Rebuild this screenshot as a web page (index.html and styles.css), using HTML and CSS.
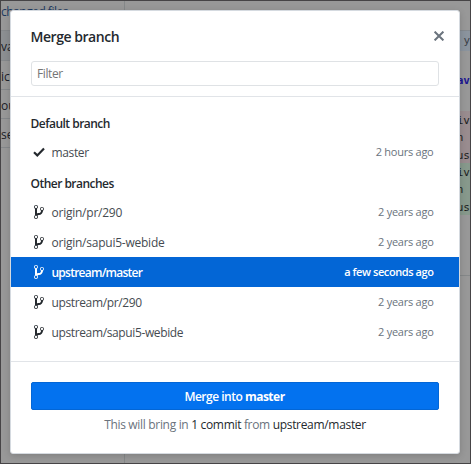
FILE: index.html
```html
<!DOCTYPE html>
<html lang="en">
<head>
<meta charset="utf-8">
<title>Merge branch</title>
<link rel="stylesheet" href="styles.css">
</head>
<body>
<svg class="symbols" aria-hidden="true">
  <symbol id="branch" viewBox="0 0 10 16"><path fill-rule="evenodd" d="M10 5c0-1.110-.89-2-2-2a1.993 1.993 0 0 0-1 3.720v.3c-.02.52-.23.98-.63 1.380-.4.400-.86.610-1.380.630-.83.020-1.480.160-2 .450V4.720a1.993 1.993 0 0 0-1-3.720C.880 1 0 1.890 0 3a2 2 0 0 0 1 1.720v6.560c-.59.350-1 .990-1 1.720 0 1.110.890 2 2 2 1.110 0 2-.890 2-2 0-.530-.200-1-.530-1.360.090-.060.480-.410.590-.470.250-.110.560-.170.940-.170 1.050-.050 1.950-.450 2.750-1.250S8.950 7.770 9 6.730h-.02C9.590 6.370 10 5.730 10 5zM2 1.800c.660 0 1.200.550 1.200 1.200 0 .650-.550 1.200-1.200 1.200C1.350 4.200.800 3.650.800 3c0-.650.550-1.200 1.200-1.200zm0 12.410c-.660 0-1.200-.550-1.200-1.200 0-.650.550-1.200 1.200-1.200.650 0 1.200.550 1.200 1.200 0 .650-.550 1.200-1.200 1.200zm6-8c-.660 0-1.200-.550-1.200-1.200 0-.650.550-1.200 1.200-1.200.650 0 1.200.550 1.200 1.200 0 .650-.550 1.200-1.200 1.200z"/></symbol>
</svg>
<div class="app">
  <aside class="sidebar">
    <div class="files head"><span>changed files</span></div>
    <div class="files on"><span>va</span></div>
    <div class="files"><span>ic</span></div>
    <div class="files"><span>ou</span></div>
    <div class="files"><span>se</span></div>
  </aside>
  <main class="diff">
    <div class="title"></div>
    <div class="hunk">y</div>
    <div class="context">av</div>
    <pre class="removed">iv
n 
us</pre>
    <pre class="added">iv
n 
us</pre>
    <div class="rest"></div>
  </main>
</div>
<section class="dialog">
  <header>
    <div class="heading"><h1>Merge branch</h1>
      <svg class="close" viewBox="0 0 10 10"><path d="M.6.6l8.800 8.800M9.400.600L.600 9.400"/></svg></div>
    <input type="text" placeholder="Filter">
  </header>
  <div class="list">
    <h2>Default branch</h2>
    <div class="row"><svg class="check" viewBox="0 0 12 10"><path d="M1 5.300l3.300 3.100L11 1.600"/></svg><span class="name">master</span><time>2 hours ago</time></div>
    <h2>Other branches</h2>
    <div class="row origin"><svg class="branch"><use href="#branch"/></svg><span class="name">origin/pr/290</span><time>2 years ago</time></div>
    <div class="row origin"><svg class="branch"><use href="#branch"/></svg><span class="name">origin/sapui5-webide</span><time>2 years ago</time></div>
    <div class="row selected"><svg class="branch"><use href="#branch"/></svg><span class="name">upstream/master</span><time>a few seconds ago</time></div>
    <div class="row"><svg class="branch"><use href="#branch"/></svg><span class="name">upstream/pr/290</span><time>2 years ago</time></div>
    <div class="row"><svg class="branch"><use href="#branch"/></svg><span class="name">upstream/sapui5-webide</span><time>2 years ago</time></div>
  </div>
  <footer>
    <button>Merge into <b>master</b></button>
    <p>This will bring in <em>1 commit</em> from <em>upstream/master</em></p>
  </footer>
</section>
</body>
</html>
```
FILE: styles.css
```css
* { box-sizing: border-box; }
body {
  margin: 0;
  width: 471px;
  height: 464px;
  overflow: hidden;
  font: 12px/18px "Open Sans", "Noto Sans", sans-serif;
  color: #24292e;
}
.symbols { position: absolute; width: 0; height: 0; }
.app {
  display: flex;
  width: 471px;
  height: 464px;
  border: 1px solid #464446;
  background: #989898;
  overflow: hidden;
}
.sidebar { width: 124px; border-right: 1px solid #858889; }
.files {
  height: 29px;
  padding-top: 7px;
  border-bottom: 1px solid #85888b;
  color: #1b2027;
  white-space: nowrap;
}
.files.head { height: 30px; padding-top: 2px; color: #1d3a60; letter-spacing: -.5px; }
.files.on { background: #8c8f92; height: 30px; }
.diff {
  flex: 1;
  display: flex;
  flex-direction: column;
  text-align: right;
  font: 11px/17.333px "DejaVu Sans Mono", monospace;
  color: #1b1d20;
}
.title { height: 30px; border-bottom: 1px solid #84898e; }
.hunk { height: 20px; padding-top: 1px; background: #8b949e; color: #3c4147; }
.context { height: 60px; padding-top: 21px; font-weight: bold; color: #1c1592; }
pre { margin: 0; height: 52px; padding-top: 1px; font: inherit; }
.removed { background: #998c8f; }
.added { background: #87998c; }
.rest { height: 61px; border-bottom: 1px solid #858889; }

.dialog {
  position: absolute;
  left: 10px;
  top: 10px;
  width: 450px;
  height: 444px;
  border: 1px solid #d5dae0;
  border-radius: 3px;
  background: #fff;
  box-shadow: 0 2px 7px rgba(0, 0, 0, .16);
}
header { height: 86px; padding: 15px 20px 0; border-bottom: 1px solid #e1e4e8; }
.heading { display: flex; justify-content: space-between; height: 35px; }
h1 { margin: 0 0 0 -.5px; font-size: 14px; line-height: 21px; font-weight: 600; letter-spacing: -.46px; }
.close { width: 10px; height: 10px; margin: 5px -5px 0 0; stroke: #6a737d; stroke-width: 2; }
input {
  display: block;
  width: 408px;
  height: 25px;
  padding: 0 5px;
  border: 1px solid #dfe2e5;
  border-radius: 3px;
  outline: 0;
  font: inherit;
  letter-spacing: -.4px;
}
input::placeholder { color: #757575; }
.list { height: 265px; padding-top: 10px; border-bottom: 1px solid #e1e4e8; }
h2 { margin: 0; height: 30px; padding: 0 19.5px; font-size: 12px; line-height: 33px; font-weight: 600; letter-spacing: -.52px; }
.row { display: flex; align-items: center; height: 30px; padding: 0 25.5px 0 20px; }
.row svg { fill: #24292e; flex: none; }
.branch { width: 10px; height: 16px; margin: 0 7.5px 0 3px; }
.check { width: 12px; height: 10px; margin: 0 6.500px 0 2px; }
.row .check { fill: none; stroke: #24292e; stroke-width: 2.2; }
.name { flex: 1; color: #454b51; padding-top: 2px; letter-spacing: -.37px; }
.origin .name { letter-spacing: -.24px; }
time { color: #6a737d; font-size: 11px; letter-spacing: -.25px; }
.row.selected { background: #0366d6; color: #fff; }
.selected .name, .selected time { color: #fff; font-weight: 600; }
.selected .name { letter-spacing: -.75px; }
.selected time { letter-spacing: -.42px; }
.row.selected svg { fill: #fff; }
footer { padding: 20px 20px 0; text-align: center; }
button {
  display: block;
  width: 408px;
  height: 28px;
  padding: 0 1px 0 0;
  border: 1px solid #0366d6;
  border-radius: 2px;
  background: #0372ef;
  color: #fff;
  font: 600 12px/28px "Open Sans", sans-serif;
  letter-spacing: -.5px;
}
b { font-weight: 700; }
p { margin: 6px 0 0; color: #6a737d; letter-spacing: -.32px; }
em { font-style: normal; color: #24292e; }
```
